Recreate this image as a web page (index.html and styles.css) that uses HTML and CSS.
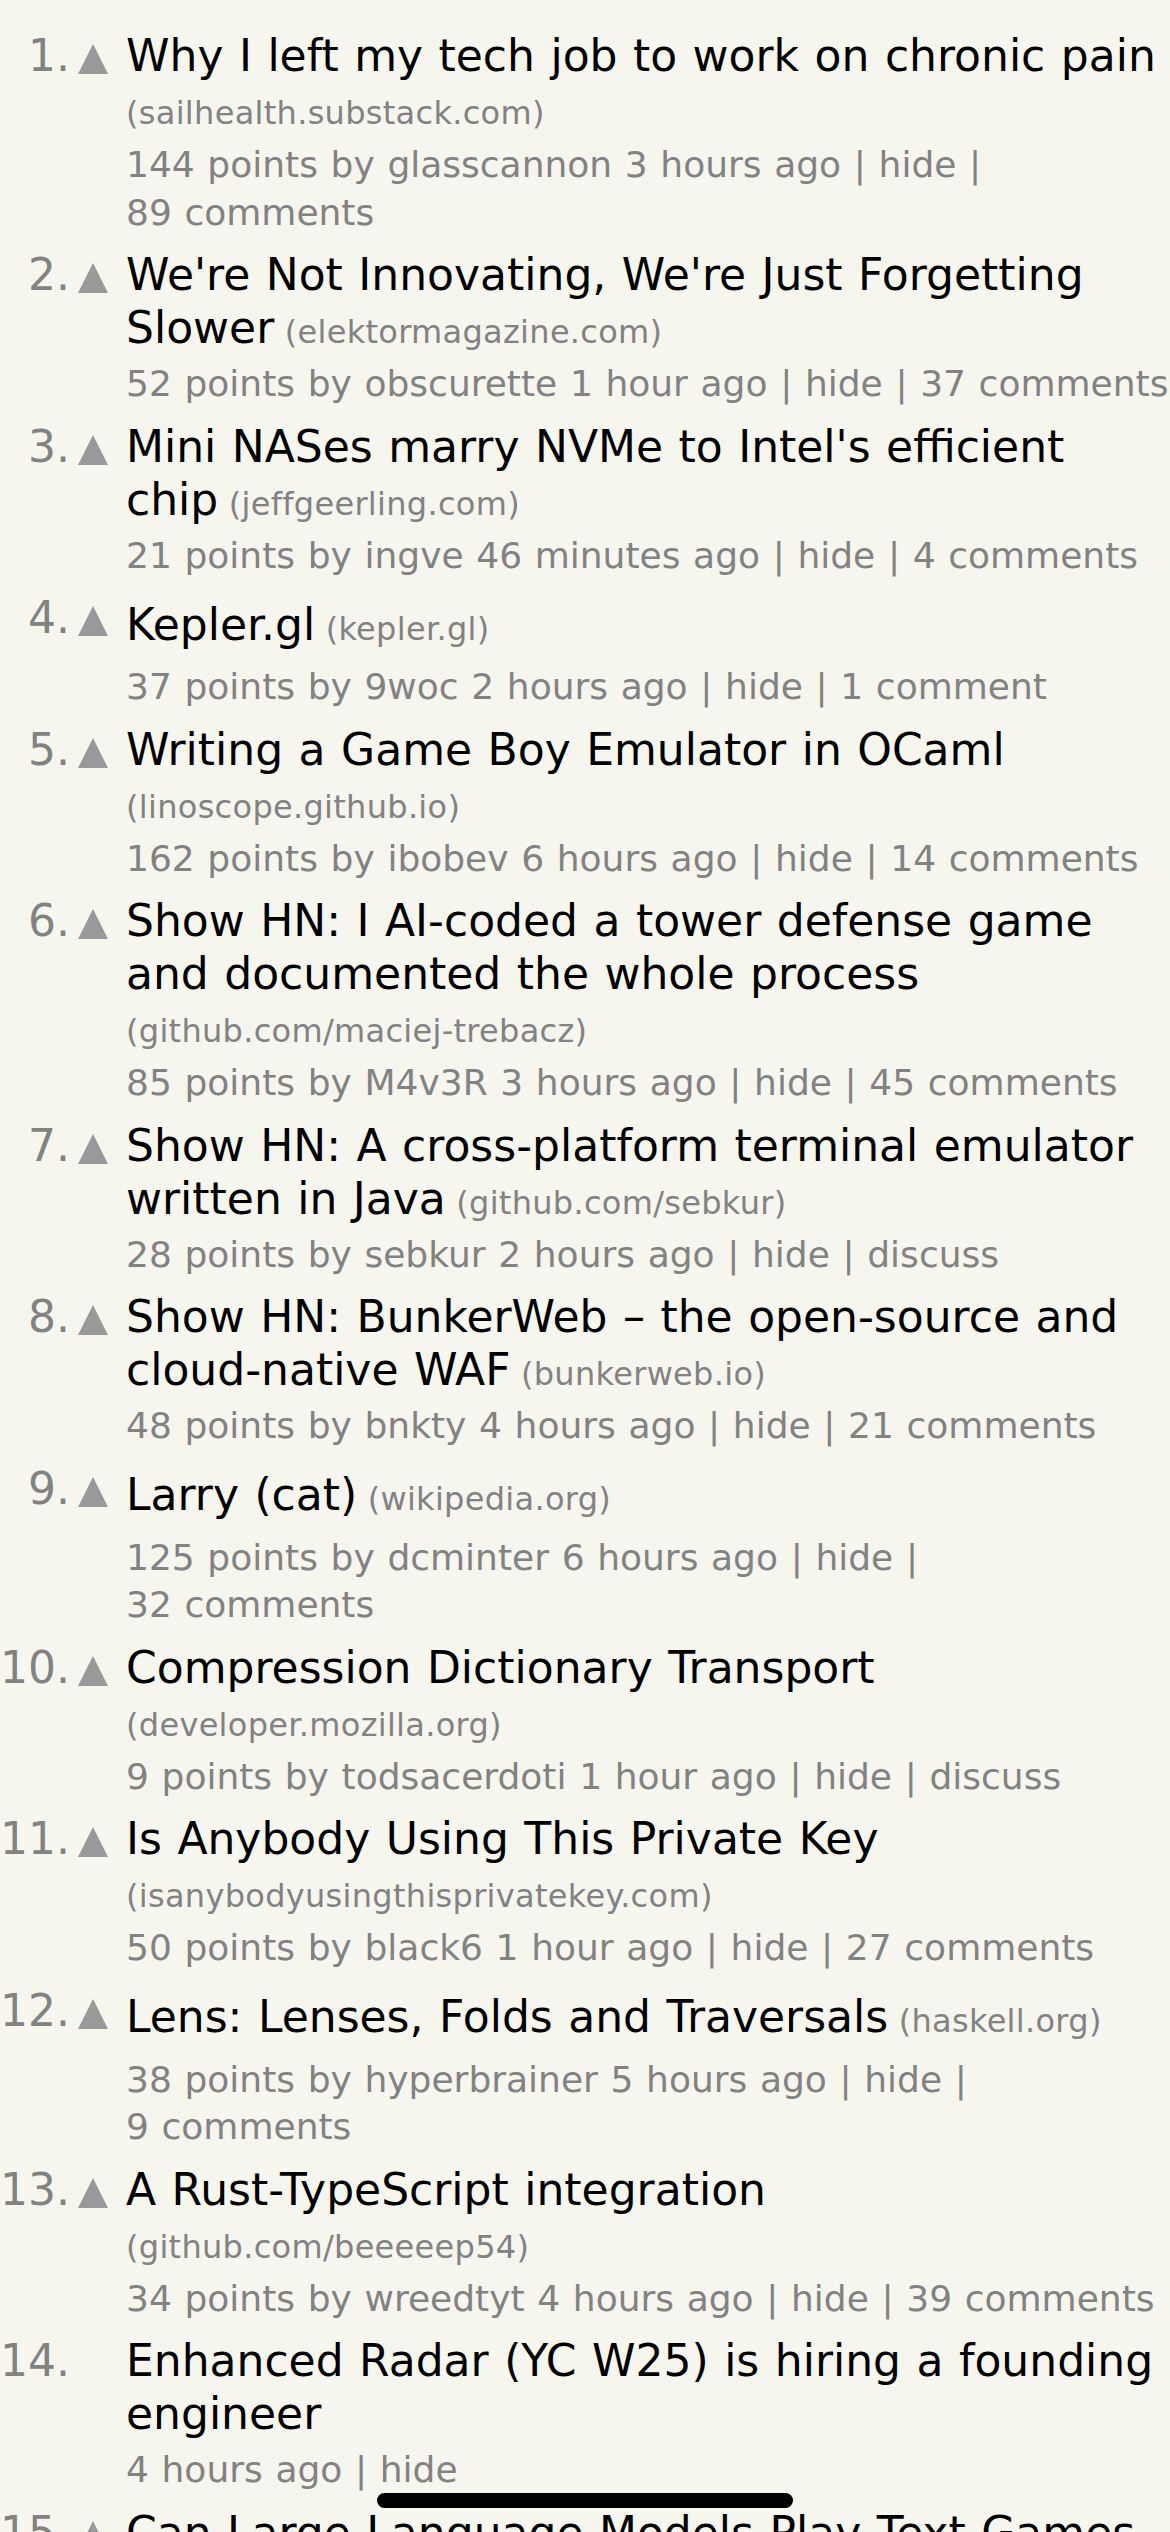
FILE: index.html
```html
<!DOCTYPE html>
<html lang="en">
<head>
<meta charset="utf-8">
<title>Hacker News</title>
<link rel="stylesheet" href="styles.css">
</head>
<body>
<main class="stories">

  <article class="story">
    <span class="rank">1.</span>
    <a class="vote" href="#"><svg class="arrow" viewBox="0 0 30 30"><polygon points="15,0 30,30 0,30"/></svg></a>
    <div class="titleline"><a href="#">Why I left my tech job to work on chronic pain</a><span class="sitebit"> (<a href="#">sailhealth.substack.com</a>)</span></div>
    <div class="subtext">144 points by <a href="#">glasscannon</a> <a href="#">3 hours ago</a> | <a href="#">hide</a> | <a href="#">89&nbsp;comments</a></div>
  </article>

  <article class="story">
    <span class="rank">2.</span>
    <a class="vote" href="#"><svg class="arrow" viewBox="0 0 30 30"><polygon points="15,0 30,30 0,30"/></svg></a>
    <div class="titleline"><a href="#">We're Not Innovating, We're Just Forgetting Slower</a><span class="sitebit"> (<a href="#">elektormagazine.com</a>)</span></div>
    <div class="subtext">52 points by <a href="#">obscurette</a> <a href="#">1 hour ago</a> | <a href="#">hide</a> | <a href="#">37&nbsp;comments</a></div>
  </article>

  <article class="story">
    <span class="rank">3.</span>
    <a class="vote" href="#"><svg class="arrow" viewBox="0 0 30 30"><polygon points="15,0 30,30 0,30"/></svg></a>
    <div class="titleline"><a href="#">Mini NASes marry NVMe to Intel's efficient chip</a><span class="sitebit"> (<a href="#">jeffgeerling.com</a>)</span></div>
    <div class="subtext">21 points by <a href="#">ingve</a> <a href="#">46 minutes ago</a> | <a href="#">hide</a> | <a href="#">4&nbsp;comments</a></div>
  </article>

  <article class="story">
    <span class="rank">4.</span>
    <a class="vote" href="#"><svg class="arrow" viewBox="0 0 30 30"><polygon points="15,0 30,30 0,30"/></svg></a>
    <div class="titleline"><a href="#">Kepler.gl</a><span class="sitebit"> (<a href="#">kepler.gl</a>)</span></div>
    <div class="subtext">37 points by <a href="#">9woc</a> <a href="#">2 hours ago</a> | <a href="#">hide</a> | <a href="#">1&nbsp;comment</a></div>
  </article>

  <article class="story">
    <span class="rank">5.</span>
    <a class="vote" href="#"><svg class="arrow" viewBox="0 0 30 30"><polygon points="15,0 30,30 0,30"/></svg></a>
    <div class="titleline"><a href="#">Writing a Game Boy Emulator in OCaml</a><span class="sitebit"> (<a href="#">linoscope.github.io</a>)</span></div>
    <div class="subtext">162 points by <a href="#">ibobev</a> <a href="#">6 hours ago</a> | <a href="#">hide</a> | <a href="#">14&nbsp;comments</a></div>
  </article>

  <article class="story">
    <span class="rank">6.</span>
    <a class="vote" href="#"><svg class="arrow" viewBox="0 0 30 30"><polygon points="15,0 30,30 0,30"/></svg></a>
    <div class="titleline"><a href="#">Show HN: I AI-coded a tower defense game and documented the whole process</a><span class="sitebit"> (<a href="#">github.com/maciej-trebacz</a>)</span></div>
    <div class="subtext">85 points by <a href="#">M4v3R</a> <a href="#">3 hours ago</a> | <a href="#">hide</a> | <a href="#">45&nbsp;comments</a></div>
  </article>

  <article class="story">
    <span class="rank">7.</span>
    <a class="vote" href="#"><svg class="arrow" viewBox="0 0 30 30"><polygon points="15,0 30,30 0,30"/></svg></a>
    <div class="titleline"><a href="#">Show HN: A cross-platform terminal emulator written in Java</a><span class="sitebit"> (<a href="#">github.com/sebkur</a>)</span></div>
    <div class="subtext">28 points by <a href="#">sebkur</a> <a href="#">2 hours ago</a> | <a href="#">hide</a> | <a href="#">discuss</a></div>
  </article>

  <article class="story">
    <span class="rank">8.</span>
    <a class="vote" href="#"><svg class="arrow" viewBox="0 0 30 30"><polygon points="15,0 30,30 0,30"/></svg></a>
    <div class="titleline"><a href="#">Show HN: BunkerWeb – the open-source and cloud-native WAF</a><span class="sitebit"> (<a href="#">bunkerweb.io</a>)</span></div>
    <div class="subtext">48 points by <a href="#">bnkty</a> <a href="#">4 hours ago</a> | <a href="#">hide</a> | <a href="#">21&nbsp;comments</a></div>
  </article>

  <article class="story">
    <span class="rank">9.</span>
    <a class="vote" href="#"><svg class="arrow" viewBox="0 0 30 30"><polygon points="15,0 30,30 0,30"/></svg></a>
    <div class="titleline"><a href="#">Larry (cat)</a><span class="sitebit"> (<a href="#">wikipedia.org</a>)</span></div>
    <div class="subtext">125 points by <a href="#">dcminter</a> <a href="#">6 hours ago</a> | <a href="#">hide</a> | <a href="#">32&nbsp;comments</a></div>
  </article>

  <article class="story">
    <span class="rank">10.</span>
    <a class="vote" href="#"><svg class="arrow" viewBox="0 0 30 30"><polygon points="15,0 30,30 0,30"/></svg></a>
    <div class="titleline"><a href="#">Compression Dictionary Transport</a><span class="sitebit"> (<a href="#">developer.mozilla.org</a>)</span></div>
    <div class="subtext">9 points by <a href="#">todsacerdoti</a> <a href="#">1 hour ago</a> | <a href="#">hide</a> | <a href="#">discuss</a></div>
  </article>

  <article class="story">
    <span class="rank">11.</span>
    <a class="vote" href="#"><svg class="arrow" viewBox="0 0 30 30"><polygon points="15,0 30,30 0,30"/></svg></a>
    <div class="titleline"><a href="#">Is Anybody Using This Private Key</a><span class="sitebit"> (<a href="#">isanybodyusingthisprivatekey.com</a>)</span></div>
    <div class="subtext">50 points by <a href="#">black6</a> <a href="#">1 hour ago</a> | <a href="#">hide</a> | <a href="#">27&nbsp;comments</a></div>
  </article>

  <article class="story">
    <span class="rank">12.</span>
    <a class="vote" href="#"><svg class="arrow" viewBox="0 0 30 30"><polygon points="15,0 30,30 0,30"/></svg></a>
    <div class="titleline"><a href="#">Lens: Lenses, Folds and Traversals</a><span class="sitebit"> (<a href="#">haskell.org</a>)</span></div>
    <div class="subtext">38 points by <a href="#">hyperbrainer</a> <a href="#">5 hours ago</a> | <a href="#">hide</a> | <a href="#">9&nbsp;comments</a></div>
  </article>

  <article class="story">
    <span class="rank">13.</span>
    <a class="vote" href="#"><svg class="arrow" viewBox="0 0 30 30"><polygon points="15,0 30,30 0,30"/></svg></a>
    <div class="titleline"><a href="#">A Rust-TypeScript integration</a><span class="sitebit"> (<a href="#">github.com/beeeeep54</a>)</span></div>
    <div class="subtext">34 points by <a href="#">wreedtyt</a> <a href="#">4 hours ago</a> | <a href="#">hide</a> | <a href="#">39&nbsp;comments</a></div>
  </article>

  <article class="story">
    <span class="rank">14.</span>
    <span class="vote"></span>
    <div class="titleline"><a href="#">Enhanced Radar (YC W25) is hiring a founding engineer</a></div>
    <div class="subtext"><a href="#">4 hours ago</a> | <a href="#">hide</a></div>
  </article>

  <article class="story">
    <span class="rank">15.</span>
    <a class="vote" href="#"><svg class="arrow" viewBox="0 0 30 30"><polygon points="15,0 30,30 0,30"/></svg></a>
    <div class="titleline"><a href="#">Can Large Language Models Play Text Games Well?</a><span class="sitebit"> (<a href="#">arxiv.org</a>)</span></div>
    <div class="subtext">40 points by <a href="#">willvarfar</a> <a href="#">5 hours ago</a> | <a href="#">hide</a> | <a href="#">12&nbsp;comments</a></div>
  </article>

</main>
<div class="home-indicator"></div>
</body>
</html>
```

FILE: styles.css
```css
html, body {
  margin: 0;
  padding: 0;
  background: #f6f6ef;
}

body {
  font-family: "DejaVu Sans", Verdana, sans-serif;
  padding-top: 29px;
  overflow: hidden;
}

a {
  color: inherit;
  text-decoration: none;
}

.stories {
  display: flex;
  flex-direction: column;
  gap: 12px;
}

.story {
  display: grid;
  grid-template-columns: 70px 56px 1fr;
  grid-template-rows: auto auto;
}

.rank {
  grid-column: 1;
  grid-row: 1;
  align-self: start;
  text-align: right;
  font-size: 44px;
  line-height: 53px;
  color: #828282;
}

.vote {
  grid-column: 2;
  grid-row: 1;
  align-self: start;
  display: block;
}

.arrow {
  display: block;
  width: 30px;
  height: 30px;
  margin: 15px 0 21px 8px;
  fill: #999999;
}

.titleline {
  grid-column: 3;
  grid-row: 1;
  align-self: center;
  font-size: 44px;
  line-height: 53px;
  word-spacing: 1.5px;
  color: #000000;
}

.sitebit {
  font-size: 32px;
  line-height: 32px;
  letter-spacing: 0.3px;
  word-spacing: 0;
  color: #828282;
}

.subtext {
  grid-column: 3;
  grid-row: 2;
  margin-top: 6px;
  font-size: 36px;
  line-height: 47.5px;
  word-spacing: 1.2px;
  color: #828282;
}

.home-indicator {
  position: fixed;
  left: 50%;
  bottom: 24px;
  width: 416px;
  height: 15px;
  margin-left: -208px;
  border-radius: 8px;
  background: #000000;
}
```
